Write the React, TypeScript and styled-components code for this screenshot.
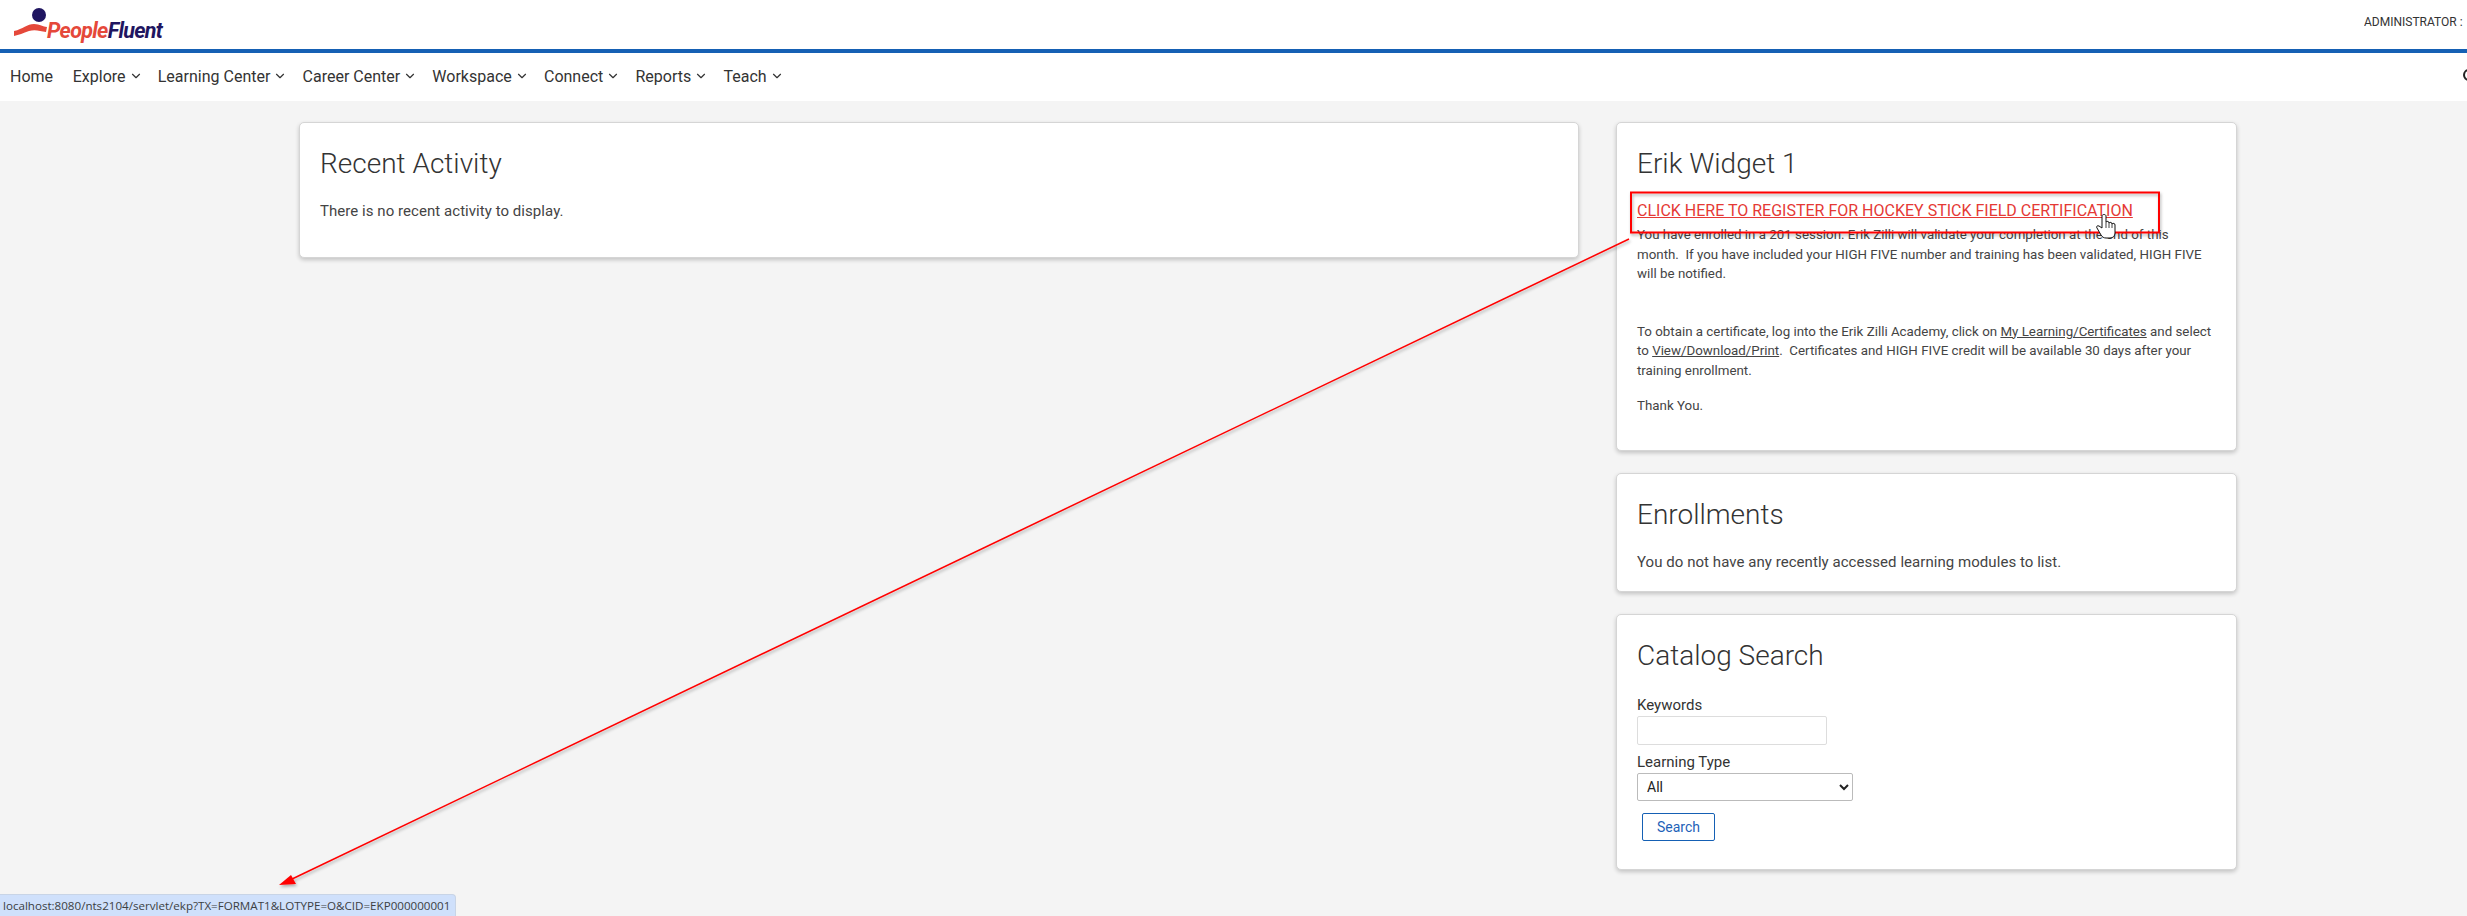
import React from 'react'
import styled, { createGlobalStyle } from 'styled-components'
import { ChevronDown } from 'lucide-react'

const GlobalStyle = createGlobalStyle`
    html, body {
        margin: 0;
        padding: 0;
        background: #f4f4f4;
        overflow: hidden;
    }
    body {
        font-family: Roboto, "Liberation Sans", sans-serif;
        color: #444;
    }
`

const Page = styled.div`
    position: relative;
    width: 2467px;
    height: 916px;
    overflow: hidden;
`

const TopBar = styled.header`
    height: 49px;
    background: #fff;
    border-bottom: 4px solid #1560b4;
    display: flex;
    align-items: center;
    justify-content: space-between;
`

const Logo = styled.div`
    display: flex;
    align-items: flex-end;
    margin-left: 13px;
    height: 36px;
`

const LogoWords = styled.div`
    display: flex;
    margin-left: -2px;
`

const LogoWord = styled.span<{ $color: string }>`
    font-family: Roboto, sans-serif;
    font-weight: 700;
    font-style: italic;
    font-size: 21.5px;
    line-height: 25px;
    letter-spacing: -0.7px;
    color: ${(p) => p.$color};
`

const UserName = styled.div`
    font-size: 12px;
    color: #333;
    white-space: nowrap;
    width: 103px;
    overflow: hidden;
    margin-bottom: 5px;
`

const NavBar = styled.nav`
    height: 46px;
    background: #fff;
    display: flex;
    align-items: center;
    justify-content: space-between;
    padding: 0 0 2px 10px;
`

const NavList = styled.div`
    display: flex;
    align-items: center;
    gap: 15.2px;
`

const NavItem = styled.a<{ $wide?: boolean }>`
    display: flex;
    align-items: center;
    gap: 3px;
    font-size: 16px;
    color: #333;
    margin-right: ${(p) => (p.$wide ? 4.5 : 0)}px;
`

const SearchToggle = styled.svg`
    flex-shrink: 0;
    margin-right: -9px;
`

const Main = styled.main`
    display: grid;
    grid-template-columns: 1280px 621px;
    column-gap: 37px;
    align-items: start;
    padding: 21px 0 0 299px;
`

const Column = styled.div`
    display: flex;
    flex-direction: column;
    gap: 22px;
`

const Card = styled.section<{ $height: number }>`
    box-sizing: border-box;
    height: ${(p) => p.$height}px;
    background: #fff;
    border: 1px solid #d5d5d5;
    border-radius: 5px;
    box-shadow: 0 2px 4px rgba(0, 0, 0, 0.2);
    padding: 24px 20px 0;
`

const CardTitle = styled.h2`
    margin: 0 0 20px;
    font-size: 28px;
    line-height: 33px;
    font-weight: 300;
    color: #333;
`

const BodyText = styled.p`
    margin: 0;
    font-size: 15px;
    line-height: 22px;
    letter-spacing: 0.05px;
    color: #444;
`

const RegisterLink = styled.a`
    display: block;
    font-size: 16px;
    line-height: 24px;
    margin: -1px 0 2px;
    color: #e53935;
    text-decoration: underline;
    white-space: nowrap;
`

const WidgetText = styled.p<{ $gap?: number }>`
    margin: ${(p) => p.$gap ?? 0}px 0 0;
    font-size: 13.33px;
    line-height: 19.5px;
    color: #444;
    white-space: pre;
`

const Underlined = styled.span`
    text-decoration: underline;
`

const SearchForm = styled.form`
    padding-top: 3px;
`

const FieldLabel = styled.label`
    display: block;
    font-size: 15px;
    line-height: 20px;
    color: #333;
`

const TextInput = styled.input`
    display: block;
    box-sizing: border-box;
    width: 190px;
    height: 29px;
    margin: 1px 0 7px;
    border: 1px solid #ddd;
    border-radius: 2px;
    background: #fff;
`

const TypeSelect = styled.select`
    display: block;
    box-sizing: border-box;
    width: 216px;
    height: 28px;
    margin: 1px 0 12px;
    padding-left: 5px;
    border: 1px solid #bbb;
    border-radius: 2px;
    background: #fff;
    font-family: Roboto, sans-serif;
    font-size: 14px;
    color: #222;
`

const SearchButton = styled.button`
    display: block;
    box-sizing: border-box;
    width: 73px;
    height: 28px;
    margin-left: 5px;
    padding: 0;
    border: 1px solid #1560b4;
    border-radius: 2px;
    background: #fff;
    font-family: Roboto, sans-serif;
    font-size: 14px;
    color: #1e62b8;
`

const StatusBubble = styled.div`
    position: absolute;
    left: 0;
    bottom: 0;
    box-sizing: border-box;
    width: 456px;
    height: 22px;
    padding-left: 3px;
    background: #cfe0fb;
    border-top: 1px solid #c8d4e6;
    border-right: 1px solid #c8d4e6;
    border-top-right-radius: 4px;
    font-family: 'Open Sans', sans-serif;
    font-size: 11.6px;
    line-height: 21px;
    color: #3c4043;
    white-space: nowrap;
`

const Annotation = styled.svg`
    position: absolute;
    left: 0;
    top: 0;
    pointer-events: none;
`

const navItems = ['Explore', 'Learning Center', 'Career Center', 'Workspace', 'Connect', 'Reports', 'Teach']

export default function App() {
    return (
        <Page>
            <GlobalStyle />
            <TopBar>
                <Logo>
                    <svg width="36" height="36" viewBox="0 0 36 36">
                        <circle cx="26" cy="8" r="7" fill="#1f1560" />
                        <path d="M1 24 C10 22 14 17 21 17 C27 17 30 20 34 20 L33 25 C27 24 22 22 16 24 C10 26 6 28 1 29 Z" fill="#e5483a" />
                    </svg>
                    <LogoWords>
                        <LogoWord $color="#e5483a">People</LogoWord>
                        <LogoWord $color="#1f1560">Fluent</LogoWord>
                    </LogoWords>
                </Logo>
                <UserName>ADMINISTRATOR :</UserName>
            </TopBar>
            <NavBar>
                <NavList>
                    <NavItem $wide>Home</NavItem>
                    {navItems.map((item) => (
                        <NavItem key={item}>
                            {item}
                            <ChevronDown size={14} strokeWidth={2} />
                        </NavItem>
                    ))}
                </NavList>
                <SearchToggle width="14" height="16" viewBox="0 0 14 16">
                    <circle cx="7" cy="7" r="5" fill="none" stroke="#222" strokeWidth="2" />
                </SearchToggle>
            </NavBar>
            <Main>
                <Card $height={136}>
                    <CardTitle>Recent Activity</CardTitle>
                    <BodyText>There is no recent activity to display.</BodyText>
                </Card>
                <Column>
                    <Card $height={329}>
                        <CardTitle>Erik Widget 1</CardTitle>
                        <RegisterLink>CLICK HERE TO REGISTER FOR HOCKEY STICK FIELD CERTIFICATION</RegisterLink>
                        <WidgetText>
                            {'You have enrolled in a 201 session. Erik Zilli will validate your completion at the end of this\nmonth.  If you have included your HIGH FIVE number and training has been validated, HIGH FIVE\nwill be notified.'}
                        </WidgetText>
                        <WidgetText $gap={38}>
                            To obtain a certificate, log into the Erik Zilli Academy, click on <Underlined>My Learning/Certificates</Underlined> and select{'\n'}to <Underlined>View/Download/Print</Underlined>.  Certificates and HIGH FIVE credit will be available 30 days after your{'\n'}training enrollment.
                        </WidgetText>
                        <WidgetText $gap={16}>Thank You.</WidgetText>
                    </Card>
                    <Card $height={119}>
                        <CardTitle>Enrollments</CardTitle>
                        <BodyText>You do not have any recently accessed learning modules to list.</BodyText>
                    </Card>
                    <Card $height={256}>
                        <CardTitle>Catalog Search</CardTitle>
                        <SearchForm>
                            <FieldLabel>Keywords</FieldLabel>
                            <TextInput />
                            <FieldLabel>Learning Type</FieldLabel>
                            <TypeSelect defaultValue="All">
                                <option>All</option>
                            </TypeSelect>
                            <SearchButton type="button">Search</SearchButton>
                        </SearchForm>
                    </Card>
                </Column>
            </Main>
            <Annotation width="2467" height="916" viewBox="0 0 2467 916">
                <defs>
                    <filter id="drop" x="-5%" y="-5%" width="110%" height="110%">
                        <feDropShadow dx="1" dy="2" stdDeviation="1.5" floodColor="#000" floodOpacity="0.3" />
                    </filter>
                </defs>
                <g filter="url(#drop)">
                    <rect x="1631" y="192.5" width="528" height="40" fill="none" stroke="#f00" strokeWidth="2" />
                    <line x1="1629" y1="239" x2="290" y2="880" stroke="#f00" strokeWidth="1.5" />
                    <path d="M279 885 L291 875 L296 884 Z" fill="#f00" />
                </g>
                <path d="M2102 216 L2102 228 L2099 226 C2097 225 2096 227 2097 228 L2101 235 C2102 237 2104 238 2106 238 L2110 238 C2113 238 2115 236 2115 233 L2115 225 C2115 223 2113 223 2112 224 C2112 222 2110 222 2109 223 C2109 221 2107 221 2106 222 L2106 216 C2106 214 2102 214 2102 216 Z" fill="#fff" stroke="#111" strokeWidth="1" />
                <path d="M2106 222 V228 M2109 223 V228 M2112 224 V228" fill="none" stroke="#111" strokeWidth="0.8" />
            </Annotation>
            <StatusBubble>localhost:8080/nts2104/servlet/ekp?TX=FORMAT1&amp;LOTYPE=O&amp;CID=EKP000000001</StatusBubble>
        </Page>
    )
}
